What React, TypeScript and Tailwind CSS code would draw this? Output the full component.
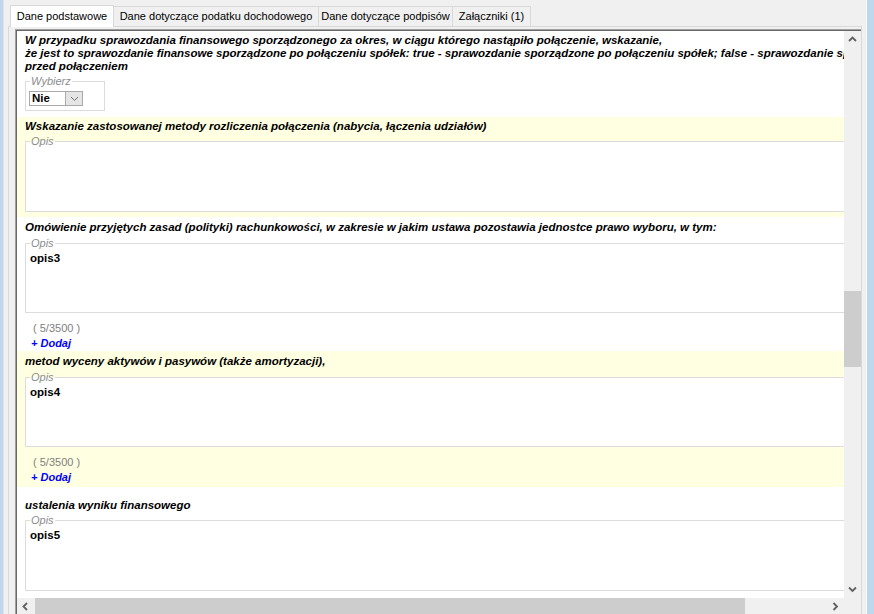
import React from "react";

const tabs = [
  { label: "Dane dotyczące podatku dochodowego", w: "w-[205px]" },
  { label: "Dane dotyczące podpisów", w: "w-[134px]" },
  { label: "Załączniki (1)", w: "w-[78px]" },
];

function Chevron({ dir }: { dir: "up" | "down" | "left" | "right" }) {
  const pts = {
    up: "1,5 4.5,1.5 8,5",
    down: "1,1.5 4.5,5 8,1.5",
    left: "5,1 1.5,4.5 5,8",
    right: "1.5,1 5,4.5 1.5,8",
  }[dir];
  const vertical = dir === "up" || dir === "down";
  return (
    <svg
      width={vertical ? 9 : 7}
      height={vertical ? 7 : 9}
      viewBox={vertical ? "0 0 9 7" : "0 0 7 9"}
    >
      <polyline points={pts} fill="none" stroke="#606060" strokeWidth="1.8" />
    </svg>
  );
}

// Opis field with legend on the border
function OpisBox({ text, h }: { text?: string; h: string }) {
  return (
    <fieldset className="w-[900px] border border-[#dcdcdc] bg-white">
      <legend className="ml-[4px] px-px text-[11px] leading-[13px] italic text-[#8c8c8c]">
        Opis
      </legend>
      <div className={`${h} pl-[4px] pt-[2px] text-[11.5px] font-bold leading-[13px] text-black`}>
        {text}
      </div>
    </fieldset>
  );
}

function Title({ children }: { children: React.ReactNode }) {
  return (
    <div className="whitespace-nowrap text-[11.5px] font-bold italic leading-[13px] text-black">
      {children}
    </div>
  );
}

function Counter() {
  return (
    <>
      <div className="mt-[9px] pl-[8px] leading-[13px] text-[#808080]">( 5/3500 )</div>
      <div className="mt-[2px] pl-[6px] font-bold italic leading-[13px] text-[#0000ff]">
        + Dodaj
      </div>
    </>
  );
}

export default function App() {
  return (
    <div className="flex h-[614px] w-[874px] overflow-hidden bg-[#f0f0f0] font-['Liberation_Sans',Arial,sans-serif] text-[11px]">
      <div className="w-[3px] bg-[#bfd7ee]" />
      <div className="w-px bg-[#e4e4e4]" />

      <div className="flex w-[862px] flex-col">
        {/* Tabs */}
        <div className="flex h-[26px] items-end pl-[6px]">
          <div className="relative z-10 mb-[-1px] flex h-[22px] w-[104px] items-center justify-center border border-b-0 border-[#d9d9d9] bg-white text-black">
            Dane podstawowe
          </div>
          {tabs.map((t) => (
            <div
              key={t.label}
              className={`flex h-[20px] ${t.w} items-center justify-center border border-l-0 border-b-0 border-[#d9d9d9] bg-[#f0f0f0] text-black`}
            >
              {t.label}
            </div>
          ))}
        </div>

        {/* Tab panel */}
        <div className="ml-[4px] flex h-[588px] w-[854px] flex-col border border-b-0 border-[#d9d9d9] bg-[#f0f0f0] pl-[6px] pt-[2px]">
          <div className="flex h-[585px] w-[846px] flex-col border-l border-t border-[#a0a0a0]">
            <div className="flex h-[584px] flex-col border-l border-t border-[#696969]">
              <div className="flex h-[567px]">
                {/* Scrolled content */}
                <div className="w-[827px] overflow-hidden bg-white">
                  <div className="w-[1100px]">
                    {/* Section 1 */}
                    <div className="h-[86px] pl-[8px] pt-[3px]">
                      <Title>
                        W przypadku sprawozdania finansowego sporządzonego za okres, w ciągu którego nastąpiło połączenie, wskazanie,
                        <br />
                        że jest to sprawozdanie finansowe sporządzone po połączeniu spółek: true - sprawozdanie sporządzone po połączeniu spółek; false - sprawozdanie sporządzone
                        <br />
                        przed połączeniem
                      </Title>
                      <fieldset className="mt-[2px] w-[80px] border border-[#dcdcdc] pb-[4px]">
                        <legend className="ml-[4px] px-px leading-[13px] italic text-[#8c8c8c]">
                          Wybierz
                        </legend>
                        <div className="ml-[3px] mt-[3px] flex h-[15px] w-[54px] border border-[#a9a9a9] bg-white">
                          <span className="flex-1 pl-[2px] text-[11.5px] font-bold leading-[13px] text-black">Nie</span>
                          <span className="flex w-[17px] items-center justify-center border-l border-[#acacac] bg-[#e5e5e5]">
                            <svg width="9" height="6" viewBox="0 0 9 6">
                              <polyline points="1,1 4.5,4.5 8,1" fill="none" stroke="#707070" strokeWidth="1" />
                            </svg>
                          </span>
                        </div>
                      </fieldset>
                    </div>

                    {/* Section 2 */}
                    <div className="h-[100px] bg-[#ffffe1] pl-[8px] pt-[3px]">
                      <Title>
                        Wskazanie zastosowanej metody rozliczenia połączenia (nabycia, łączenia udziałów)
                      </Title>
                      <div className="mt-[2px]">
                        <OpisBox h="h-[63px]" />
                      </div>
                    </div>

                    {/* Section 3 */}
                    <div className="h-[134px] pl-[8px] pt-[4px]">
                      <Title>
                        Omówienie przyjętych zasad (polityki) rachunkowości, w zakresie w jakim ustawa pozostawia jednostce prawo wyboru, w tym:
                      </Title>
                      <div className="mt-[3px]">
                        <OpisBox text="opis3" h="h-[62px]" />
                      </div>
                      <Counter />
                    </div>

                    {/* Section 4 */}
                    <div className="h-[136px] bg-[#ffffe1] pl-[8px] pt-[4px]">
                      <Title>metod wyceny aktywów i pasywów (także amortyzacji),</Title>
                      <div className="mt-[3px]">
                        <OpisBox text="opis4" h="h-[62px]" />
                      </div>
                      <Counter />
                    </div>

                    {/* Section 5 */}
                    <div className="pl-[8px] pt-[12px]">
                      <Title>ustalenia wyniku finansowego</Title>
                      <div className="mt-[2px]">
                        <OpisBox text="opis5" h="h-[63px]" />
                      </div>
                    </div>
                  </div>
                </div>

                {/* Vertical scrollbar */}
                <div className="flex w-[17px] flex-col bg-[#f0f0f0]">
                  <div className="flex h-[17px] items-center justify-center">
                    <Chevron dir="up" />
                  </div>
                  <div className="h-[243px]" />
                  <div className="h-[76px] bg-[#cdcdcd]" />
                  <div className="flex-1" />
                  <div className="flex h-[17px] items-center justify-center">
                    <Chevron dir="down" />
                  </div>
                </div>
              </div>

              {/* Horizontal scrollbar */}
              <div className="flex h-[16px]">
                <div className="flex w-[827px] bg-[#f0f0f0]">
                  <div className="flex w-[17px] items-center justify-center">
                    <Chevron dir="left" />
                  </div>
                  <div className="ml-px w-[710px] bg-[#cdcdcd]" />
                  <div className="flex-1" />
                  <div className="flex w-[17px] items-center justify-center">
                    <Chevron dir="right" />
                  </div>
                </div>
                <div className="w-[17px] bg-[#f0f0f0]" />
              </div>
            </div>
          </div>
        </div>
      </div>

      <div className="w-[8px] border-l border-[#f8fbfe] bg-[#bfd7ee]" />
    </div>
  );
}
